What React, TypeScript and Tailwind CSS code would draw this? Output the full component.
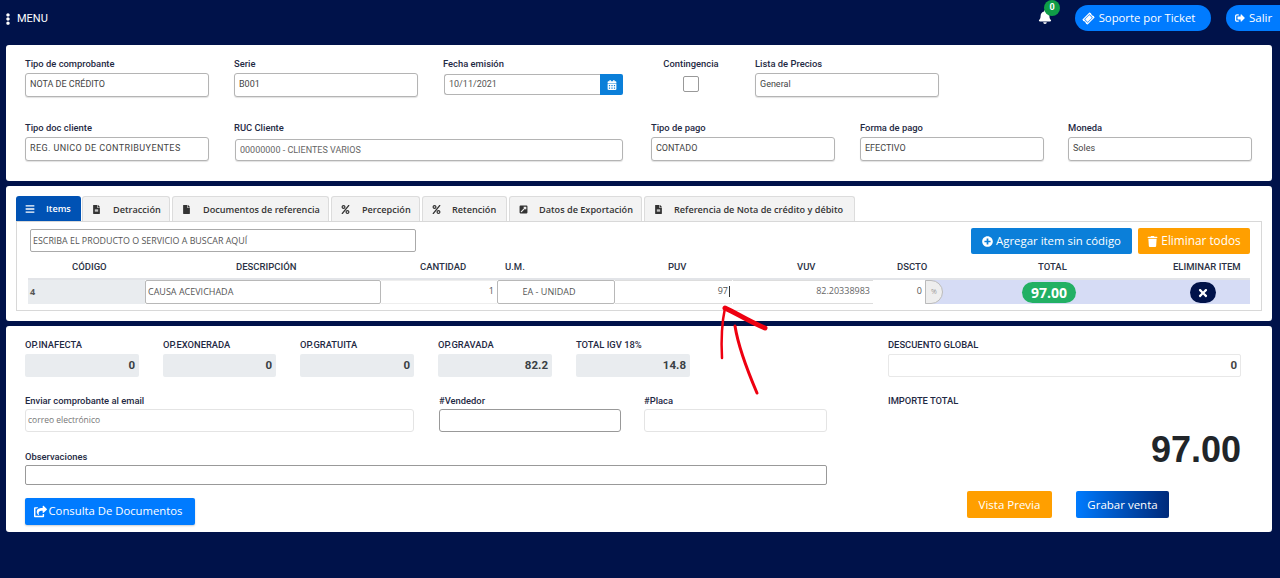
import React from "react";
import { FaEllipsisV, FaBell, FaTicketAlt, FaSignOutAlt, FaCalendarAlt, FaBars, FaFileAlt, FaFile, FaPercent, FaExternalLinkSquareAlt, FaPlusCircle, FaTrash, FaTimes, FaShareSquare } from "react-icons/fa";

function Label({ children, className = "" }: { children: React.ReactNode; className?: string }) {
  return <div className={`h-[13px] text-[9.4px] leading-[13px] font-medium text-[#1f2a44] font-['Roboto',sans-serif] whitespace-nowrap ${className}`}>{children}</div>;
}

function Box({ children, className = "" }: { children?: React.ReactNode; className?: string }) {
  return <div className={`flex items-center rounded-[3px] border border-[#b4b4b4] bg-white pl-1 text-[9px] text-[#444] font-['Roboto',sans-serif] whitespace-nowrap shadow-[0_1px_1px_rgba(0,0,0,0.12)] ${className}`}>{children}</div>;
}

function Field({ label, value, className = "", valueClass = "" }: { label: string; value: string; className?: string; valueClass?: string }) {
  return (
    <div className={className}>
      <Label>{label}</Label>
      <Box className={`mt-[3px] h-[24px] w-full pb-[1px] ${valueClass}`}>{value}</Box>
    </div>
  );
}

const tabs = [
  { t: "Detracción", w: "w-[88px]", i: <FaFileAlt className="text-[9px]" />, g: "gap-[12px]" },
  { t: "Documentos de referencia", w: "w-[157px]", i: <FaFile className="text-[9px]" />, g: "gap-[12px]" },
  { t: "Percepción", w: "w-[89px]", i: <FaPercent className="text-[9px]" />, g: "gap-[12px]" },
  { t: "Retención", w: "w-[85px]", i: <FaPercent className="text-[9px]" />, g: "gap-[11px]" },
  { t: "Datos de Exportación", w: "w-[133px]", i: <FaExternalLinkSquareAlt className="text-[9px]" />, g: "gap-[11px]" },
  { t: "Referencia de Nota de crédito y débito", w: "w-[211px]", i: <FaFileAlt className="text-[9px]" />, g: "gap-[11px]" },
];

function Stat({ label, value, className = "w-[114px]" }: { label: string; value: string; className?: string }) {
  return (
    <div className={className}>
      <Label>{label}</Label>
      <div className="mt-[3px] flex h-[23px] items-center justify-end rounded-[2px] bg-[#e9ecef] pr-[4px] text-[11.5px] font-bold text-[#3a3f44] font-['Roboto',sans-serif]">{value}</div>
    </div>
  );
}

export default function App() {
  return (
    <div className="relative h-[578px] w-[1280px] overflow-hidden bg-[#00124a] font-['Roboto',sans-serif]">
      <header className="flex h-[45px] items-start justify-between">
        <div className="mt-[11px] flex items-center pl-[2px] text-white">
          <FaEllipsisV className="text-[12px]" />
          <span className="ml-[3px] text-[11px]">MENU</span>
        </div>
        <div className="mt-[5px] flex items-start">
          <div className="relative mr-[23px] mt-[5px] text-white">
            <FaBell className="text-[14px]" />
            <span className="absolute -top-[10px] left-[6px] flex h-[16px] w-[16px] items-center justify-center rounded-full bg-[#0f9d47] text-[9px] font-bold">0</span>
          </div>
          <div className="flex h-[26px] w-[136px] items-center justify-center gap-[5px] rounded-full bg-[#007bff] pr-[8px] text-[11.3px] text-white font-['Open_Sans',sans-serif]">
            <FaTicketAlt className="-rotate-45 text-[11px]" />Soporte por Ticket
          </div>
          <div className="ml-[15px] flex h-[26px] w-[54px] items-center justify-start gap-[4px] rounded-l-full rounded-r-[8px] bg-[#007bff] pl-[9px] text-[11.5px] text-white font-['Open_Sans',sans-serif]">
            <FaSignOutAlt className="text-[10px]" />Salir
          </div>
        </div>
      </header>

      <main className="flex flex-col gap-[5px] pl-[6px] pr-[8px]">
        <section className="h-[136px] rounded-[3px] bg-white pl-[19px] pt-[12px]">
          <div className="flex items-start">
            <Field className="w-[184px]" label="Tipo de comprobante" value="NOTA DE CRÉDITO" />
            <Field className="ml-[25px] w-[184px]" label="Serie" value="B001" />
            <div className="ml-[25px] w-[180px]">
              <Label>Fecha emisión</Label>
              <div className="ml-[1px] mt-[4px] flex h-[21px]">
                <div className="flex w-[157px] items-center rounded-l-[3px] border border-r-0 border-[#b4b4b4] pl-1 pt-[1px] text-[9px] text-[#555]">10/11/2021</div>
                <div className="flex w-[23px] items-center justify-center rounded-r-[2px] bg-[#0b7fd9] text-white"><FaCalendarAlt className="text-[10px]" /></div>
              </div>
            </div>
            <div className="ml-[40px] flex w-[56px] flex-col items-center">
              <Label>Contingencia</Label>
              <div className="mt-[6px] h-[16px] w-[16px] rounded-[2px] border border-[#999] bg-white" />
            </div>
            <Field className="ml-[36px] w-[184px]" label="Lista de Precios" value="General" />
          </div>
          <div className="mt-[24px] flex items-start">
            <Field className="w-[184px]" label="Tipo doc cliente" value="REG. UNICO DE CONTRIBUYENTES" valueClass="tracking-[0.4px]" />
            <div className="ml-[25px] w-[390px]">
              <Label>RUC Cliente</Label>
              <Box className="ml-[1px] mt-[5px] h-[22px] w-[388px] pt-[2px] text-[#666]">00000000 - CLIENTES VARIOS</Box>
            </div>
            <Field className="ml-[27px] w-[184px]" label="Tipo de pago" value="CONTADO" />
            <Field className="ml-[25px] w-[184px]" label="Forma de pago" value="EFECTIVO" />
            <Field className="ml-[24px] w-[184px]" label="Moneda" value="Soles" />
          </div>
        </section>

        <section className="h-[135px] rounded-[3px] bg-white pl-[10px] pr-[10px] pt-[10px]">
          <div className="flex h-[25px] items-stretch gap-[2px] font-['Open_Sans',sans-serif] text-[9.15px] font-semibold text-[#333]">
            <div className="-mr-[1px] flex w-[65px] items-center gap-[11px] rounded-t-[3px] bg-[#0052b4] pl-[9px] pt-[1px] text-white">
              <FaBars className="text-[10px]" />Items
            </div>
            {tabs.map((t) => (
              <div key={t.t} className={`flex ${t.w} items-center ${t.g} rounded-t-[3px] border border-b-0 border-[#dcdcdc] bg-[#f3f3f3] pl-[9px] pt-[1px] whitespace-nowrap`}>
                {t.i}{t.t}
              </div>
            ))}
          </div>
          <div className="h-[90px] border border-[#d8d8d8] px-[11px] pt-[6px]">
            <div className="flex items-start justify-between">
              <div className="ml-[2px] mt-[1px] flex h-[23px] w-[386px] items-center rounded-[2px] border border-[#aaa] pl-[2px] text-[8.9px] text-[#555] font-['Open_Sans',sans-serif]">ESCRIBA EL PRODUCTO O SERVICIO A BUSCAR AQUÍ</div>
              <div className="flex gap-[6px] font-['Open_Sans',sans-serif] text-white">
                <div className="flex h-[26px] w-[161px] items-center justify-center gap-[3px] rounded-[2px] bg-[#0b7fd9] text-[11.4px]"><FaPlusCircle className="text-[11px]" />Agregar item sin código</div>
                <div className="flex h-[26px] w-[112px] items-center justify-center gap-[3px] rounded-[2px] bg-[#ff9f00] text-[11.8px]"><FaTrash className="text-[11px]" />Eliminar todos</div>
              </div>
            </div>
            <div className="mt-[3px] flex h-[21px] items-center text-[9.5px] font-medium text-[#2b3245]">
              <div className="w-[117px] pl-[44px]">CÓDIGO</div>
              <div className="w-[236px] pl-[91px]">DESCRIPCIÓN</div>
              <div className="w-[116px] pl-[39px]">CANTIDAD</div>
              <div className="w-[118px] pl-[8px]">U.M.</div>
              <div className="w-[117px] pl-[53px]">PUV</div>
              <div className="w-[142px] pl-[65px]">VUV</div>
              <div className="w-[106px] pl-[23px]">DSCTO</div>
              <div className="w-[130px] pl-[58px]">TOTAL</div>
              <div className="pl-[63px] whitespace-nowrap">ELIMINAR ITEM</div>
            </div>
            <div className="flex h-[26px] items-stretch border-t-[2px] border-[#e2e4e8] text-[9px] text-[#555] font-['Open_Sans',sans-serif]">
              <div className="flex w-[117px] items-center bg-[#e9ecef] pl-[2px] font-bold">4</div>
              <div className="flex w-[236px] items-center rounded-[2px] border border-[#b8b8b8] bg-white pl-[2px]">CAUSA ACEVICHADA</div>
              <div className="flex w-[116px] items-center justify-end border-y border-[#eee] bg-white pr-[3px] pb-[2px]">1</div>
              <div className="flex w-[118px] items-center justify-center rounded-[2px] border border-[#b8b8b8] bg-white pr-[14px]">EA - UNIDAD</div>
              <div className="flex w-[117px] items-center justify-end border-y border-[#ddd] bg-white pr-[2px] pb-[2px]">97<span className="ml-px h-[11px] w-px bg-[#333]" /></div>
              <div className="ml-px flex w-[140px] items-center justify-end border-y border-[#ddd] bg-white pr-[3px] pb-[2px] text-[#666]">82.20338983</div>
              <div className="ml-px flex w-[51px] items-center justify-end bg-white pr-[3px] pb-[2px]">0</div>
              <div className="flex flex-1 items-stretch bg-[#d6dcf5]">
                <div className="flex w-[18px] items-center justify-center rounded-r-full border border-[#bbb] bg-[#eee] text-[7px] text-[#999]">%</div>
                <div className="ml-[79px] mt-[2px] flex h-[21px] w-[54px] items-center justify-center rounded-full bg-[#22b064] text-[14px] font-bold text-white">97.00</div>
                <div className="ml-[114px] mt-[2px] flex h-[21px] w-[26px] items-center justify-center rounded-full bg-[#00124a] text-white"><FaTimes className="text-[12px]" /></div>
              </div>
            </div>
          </div>
        </section>

        <section className="flex h-[206px] rounded-[3px] bg-white pl-[19px] pt-[12px]">
          <div className="w-[802px]">
            <div className="flex gap-[24px]">
              <Stat label="OP.INAFECTA" value="0" />
              <Stat className="w-[113px]" label="OP.EXONERADA" value="0" />
              <Stat label="OP.GRATUITA" value="0" />
              <Stat label="OP.GRAVADA" value="82.2" />
              <Stat label="TOTAL IGV 18%" value="14.8" />
            </div>
            <div className="mt-[17px] flex items-start">
              <div className="w-[389px]">
                <Label>Enviar comprobante al email</Label>
                <div className="mt-[2px] flex h-[23px] items-center rounded-[3px] border border-[#e4e4e4] pl-[2px] text-[8.5px] text-[#777] font-['Open_Sans',sans-serif]">correo electrónico</div>
              </div>
              <div className="ml-[25px] w-[182px]">
                <Label>#Vendedor</Label>
                <div className="mt-[2px] h-[23px] rounded-[3px] border border-[#999]" />
              </div>
              <div className="ml-[23px] w-[183px]">
                <Label>#Placa</Label>
                <div className="mt-[2px] h-[23px] rounded-[3px] border border-[#e4e4e4]" />
              </div>
            </div>
            <div className="mt-[18px]">
              <Label>Observaciones</Label>
              <div className="mt-[2px] h-[20px] rounded-[2px] border border-[#999]" />
            </div>
            <div className="mt-[13px] flex h-[27px] w-[170px] items-center justify-center gap-[2px] rounded-[2px] bg-[#007bff] pr-[4px] text-[11.3px] text-white font-['Open_Sans',sans-serif] shadow-[0_1px_2px_rgba(0,0,0,0.2)]">
              <FaShareSquare className="text-[13px]" />Consulta De Documentos
            </div>
          </div>
          <div className="ml-[61px] w-[353px]">
            <Label>DESCUENTO GLOBAL</Label>
            <div className="mt-[3px] flex h-[23px] items-center justify-end rounded-[2px] border border-[#e8e8e8] pr-[3px] text-[11.5px] font-bold text-[#444]">0</div>
            <Label className="mt-[17px]">IMPORTE TOTAL</Label>
            <div className="mt-[21px] text-right font-['Liberation_Sans',sans-serif] text-[36px] font-bold leading-[44px] text-[#212529]">97.00</div>
            <div className="mt-[19px] flex gap-[24px] pl-[79px] text-[11.5px] text-white font-['Open_Sans',sans-serif]">
              <div className="flex h-[27px] w-[85px] items-center justify-center rounded-[2px] bg-[#ff9f00]">Vista Previa</div>
              <div className="flex h-[27px] w-[93px] items-center justify-center rounded-[2px] bg-gradient-to-r from-[#007bff] to-[#002a7a]">Grabar venta</div>
            </div>
          </div>
        </section>
      </main>

      <svg className="pointer-events-none absolute left-0 top-0" width="1280" height="578" viewBox="0 0 1280 578" fill="none">
        <path d="M722 358 C721 340 722 322 725 308" stroke="#ee0010" strokeWidth="2.5" strokeLinecap="round" />
        <path d="M725 308 C738 314 750 322 765 328" stroke="#ee0010" strokeWidth="5" strokeLinecap="round" />
        <path d="M735 326 C738 345 748 372 757 393" stroke="#ee0010" strokeWidth="3" strokeLinecap="round" />
      </svg>
    </div>
  );
}
